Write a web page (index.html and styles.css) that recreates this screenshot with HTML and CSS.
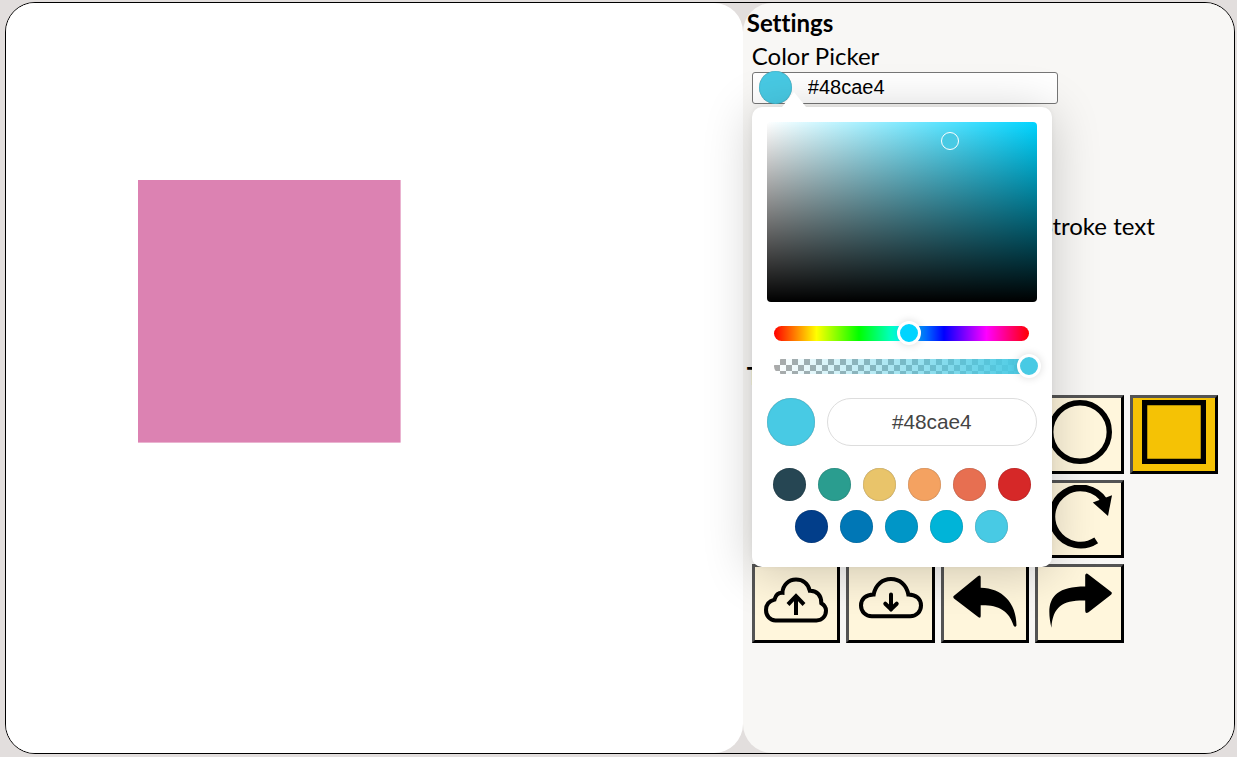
FILE: index.html
```html
<!DOCTYPE html>
<html lang="en">
<head>
<meta charset="utf-8">
<title>Drawing board</title>
<link rel="stylesheet" href="styles.css">
</head>
<body>
<main class="app">
  <section class="board">
    <svg class="drawing" viewBox="0 0 263 263"><rect width="262.6" height="262.6" fill="#dc82b2"/></svg>
  </section>
  <aside class="panel">
    <h2 class="heading">Settings</h2>
    <div class="field">
      <label class="label" for="color">Color Picker</label>
      <div class="color-input">
        <span class="chip"></span>
        <input id="color" type="text" value="#48cae4">
      </div>
      <div class="picker">
        <div class="shade"><span class="shade-marker"></span></div>
        <div class="hue"><span class="thumb hue-thumb"></span></div>
        <div class="alpha"><span class="thumb alpha-thumb"></span></div>
        <div class="value-row">
          <span class="preview"></span>
          <input class="value" type="text" value="#48cae4">
        </div>
        <div class="swatches">
          <span class="swatch navy"></span><span class="swatch green"></span><span class="swatch sand"></span><span class="swatch orange"></span><span class="swatch coral"></span><span class="swatch red"></span><span class="swatch blue1"></span><span class="swatch blue2"></span><span class="swatch blue3"></span><span class="swatch blue4"></span><span class="swatch blue5"></span>
        </div>
      </div>
    </div>
    <p class="option">Stroke text</p>
    <h2 class="heading tools-heading">Tools</h2>
    <div class="tools">
      <button class="tool circle"><svg viewBox="0 0 64 64"><circle cx="32" cy="32" r="29.3" fill="none" stroke="#000" stroke-width="5.4"/></svg></button>
      <button class="tool active"><svg viewBox="0 0 64 64"><rect x="2.6" y="2.6" width="58.8" height="58.8" fill="none" stroke="#000" stroke-width="5.3"/></svg></button>
      <button class="tool rotate"><svg viewBox="0 0 64 64"><path d="M48.2 55.4A28.6 28.6 0 1 1 56.5 16" fill="none" stroke="#000" stroke-width="6.8"/><path d="M44.8 17.4L64 10.2L60 31Z"/></svg></button>
      <button class="tool upload"><svg viewBox="0 0 64 64"><g fill="none" stroke="#000" stroke-width="4"><path d="M11.5 51.4H52.5C58.3 51.4 62 47 62 41.5C62 37.7 60 35.8 57.3 34.2C57.5 27 53.3 21.5 45.8 21.7C44 14.5 38.5 10.5 32 10.5C24.5 10.5 18.6 16.3 18.5 23.8C14.5 23.6 11.6 26.4 10.5 30.6C5 32 2 36 2 41C2 47 6 51.4 11.5 51.4Z"/><path d="M32 46V27.5M24 35.5L32 27.1L40 35.5"/></g></svg></button>
      <button class="tool download"><svg viewBox="0 0 64 64"><g fill="none" stroke="#000" stroke-width="4"><path d="M12.8 47.2H51.2C57.5 47.2 62 42.5 62 36.5C62 30 57.2 25.5 49.3 25.5C47.7 15.9 40.7 10 32 10C23.3 10 16.3 15.9 14.7 25.5C6.8 25.5 2 30 2 36.5C2 42.5 6.5 47.2 12.8 47.2Z"/><path d="M32 25.5V40.5M26.3 34.7L32 40.3L37.7 34.7" stroke-linecap="round"/></g></svg></button>
      <button class="tool"><svg viewBox="0 0 64 64"><path d="M.4 27.2Q0 28.6 1 29.5L25.5 48.2Q27.7 49.6 27.7 47V36.2C45 35.8 56 41.3 60.7 56.8Q62.3 59 63.5 56.5C63.5 34 49 19 27.7 18.8V8Q27.5 5.4 25.2 7Z"/></svg></button>
      <button class="tool"><svg viewBox="0 0 64 64"><path d="M63.6 23.3Q64.2 24.7 63 25.8L40.5 43.2Q37.4 45.2 37.2 41.7V31.6C15 31.2 5 37.2 3.4 58.7C-2.5 33.2 3 17.5 37.2 17.5V6.2Q37.7 3.4 40.5 5.4Z"/></svg></button>
    </div>
  </aside>
</main>
</body>
</html>
```
FILE: styles.css
```css
* { box-sizing: border-box; }
body {
  margin: 0;
  padding: 2px 2px 3px 5px;
  height: 757px;
  overflow: hidden;
  background: #e2dedd;
  color: #000;
  font-family: Lato, sans-serif;
  font-size: 24px;
  font-variant-ligatures: none;
}
.app {
  display: grid;
  grid-template-columns: 3fr 2fr;
  height: 752px;
  border: 1px solid #000;
  border-radius: 30px;
}
.board {
  padding: 177px 0 0 132px;
  background: #fff;
  border-radius: 29px;
}
.drawing { display: block; width: 263px; height: 263px; }
.panel {
  padding: 5px 0 0 4px;
  background: #f8f7f5;
  border-radius: 29px;
}
.heading { margin: 0; font-size: 24px; line-height: 29px; font-weight: 700; }
.field { position: relative; margin: 4px 0 0 5px; }
.label { display: block; line-height: 29px; }
.color-input {
  display: flex;
  align-items: center;
  width: 306px;
  height: 32px;
  margin-top: 2px;
  padding-left: 7px;
  border: 1px solid #767676;
  border-radius: 3px;
  background: #fff;
}
.chip {
  flex: none;
  width: 33px;
  height: 33px;
  margin: -2px 16px 0 -1px;
  border-radius: 50%;
  background: #48cae4;
  box-shadow: inset 0 0 1px rgba(0,0,0,.5);
}
input { border: 0; padding: 0; background: none; font-family: "Liberation Sans", Arial, sans-serif; outline: 0; }
#color { width: 230px; font-size: 20px; height: 28px; margin-top: -2px; }

.picker {
  position: absolute;
  z-index: 2;
  top: 66px;
  left: 0;
  width: 300px;
  height: 460px;
  padding: 15px;
  background: #fff;
  border-radius: 10px;
  box-shadow: 0 0 5px rgba(0,0,0,.05), 0 5px 50px rgba(0,0,0,.2);
}
.picker::before {
  content: "";
  position: absolute;
  left: 30px;
  top: -15px;
  border: solid transparent;
  border-width: 0 12px 15px;
  border-bottom-color: #fff;
}
.shade {
  position: relative;
  height: 180px;
  border-radius: 4px;
  background: linear-gradient(transparent, #000), linear-gradient(90deg, #fff, #00d4ff);
}
.shade-marker {
  position: absolute;
  left: 174px;
  top: 10px;
  width: 18px;
  height: 18px;
  border: 1px solid #fff;
  border-radius: 50%;
  background: #48cae4;
}
.hue, .alpha { position: relative; width: 255px; height: 15px; margin-left: 7px; border-radius: 8px; }
.hue {
  margin-top: 24px;
  background: linear-gradient(90deg, #f00 0%, #ff0 16.66%, #0f0 33.33%, #0ff 50%, #00f 66.66%, #f0f 83.33%, #f00 100%);
}
.alpha {
  margin-top: 18px;
  background:
    linear-gradient(90deg, transparent, #48cae4),
    repeating-conic-gradient(#aaa 0 25%, #fff 0 50%) 0 0 / 12px 12px;
}
.thumb {
  position: absolute;
  width: 24px;
  height: 24px;
  border: 3px solid #fff;
  border-radius: 50%;
  box-shadow: 0 0 8px rgba(0,0,0,.15);
}
.hue-thumb { left: 123px; top: -5px; background: #00d4ff; }
.alpha-thumb { left: 243px; top: -5px; background: #48cae4; }
.value-row { display: flex; gap: 12px; margin-top: 24px; }
.preview { width: 48px; height: 48px; border-radius: 50%; background: #48cae4; box-shadow: inset 0 0 1px rgba(0,0,0,.5); }
.value {
  width: 210px;
  height: 48px;
  border: 1px solid #ddd;
  border-radius: 24px;
  color: #444;
  font-size: 20.8px;
  text-align: center;
}
.swatches { display: flex; flex-wrap: wrap; justify-content: center; gap: 9px 12px; margin-top: 22px; }
.swatch { width: 33px; height: 33px; border-radius: 50%; box-shadow: inset 0 0 1px rgba(0,0,0,.5); }
.navy { background: #264653; }
.green { background: #2a9d8f; }
.sand { background: #e9c46a; }
.orange { background: #f4a261; }
.coral { background: #e76f51; }
.red { background: #d62828; }
.blue1 { background: #023e8a; }
.blue2 { background: #0077b6; }
.blue3 { background: #0096c7; }
.blue4 { background: #00b4d8; }
.blue5 { background: #48cae4; }

.option { width: 408px; margin: 107px 0 0; line-height: 29px; text-align: right; }
.tools-heading { margin-top: 121px; }
.tools {
  display: grid;
  grid-template-columns: repeat(5, 88.5px);
  grid-auto-rows: 78.5px;
  gap: 6px;
  margin: 5px 0 0 5px;
}
.tool {
  display: flex;
  justify-content: center;
  padding: 2px 0 0;
  background: #fff6dc;
  border: 3px outset #000;
}
.tool svg { width: 64px; height: 64px; }
.circle, .rotate { grid-column: 4; }
.upload { grid-column: 1; }
.active { background: #f5c205; }
```
